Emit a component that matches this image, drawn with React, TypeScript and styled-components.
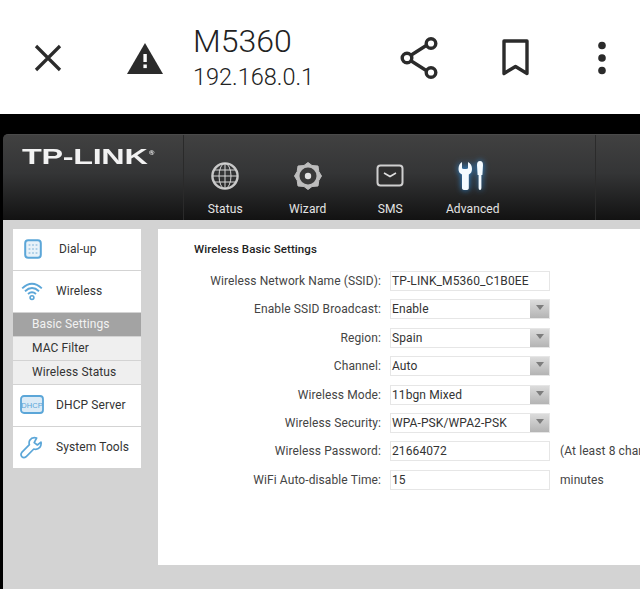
import React from 'react';
import styled, { createGlobalStyle } from 'styled-components';

const GlobalStyle = createGlobalStyle`
  html,
  body {
    margin: 0;
    padding: 0;
    background: #000;
    overflow: hidden;
  }
  * {
    box-sizing: border-box;
  }
`;

const Page = styled.div`
  width: 640px;
  height: 589px;
  overflow: hidden;
  display: flex;
  flex-direction: column;
  background: #000;
  font-family: Roboto, 'Liberation Sans', sans-serif;
`;

const TopBar = styled.header`
  height: 114px;
  flex: none;
  position: relative;
  display: grid;
  grid-template-columns: 96px 97px 1fr 96px 96px 76px;
  align-items: center;
  background: #fff;
  color: #2b2b2b;
`;

const IconCell = styled.div`
  display: flex;
  justify-content: center;
  align-items: center;
  height: 100%;
  padding-top: 1px;
`;

const TitleBlock = styled.div`
  display: flex;
  flex-direction: column;
  gap: 3px;
  margin-top: -2px;
`;

const Title = styled.div`
  font-size: 32px;
  line-height: 38px;
  font-weight: 300;
  color: #222;
`;

const Subtitle = styled.div`
  font-size: 23.5px;
  line-height: 28px;
  font-weight: 300;
  color: #222;
`;

const Router = styled.div`
  margin: 20px 0 0 3px;
  flex: 1;
  display: flex;
  flex-direction: column;
  min-height: 0;
`;

const Header = styled.div`
  height: 86px;
  flex: none;
  display: flex;
  border-radius: 5px 0 0 0;
  border-top: 1px solid #4a4a4a;
  background: linear-gradient(#414141 0%, #343536 45%, #121212 100%);
`;

const LogoBox = styled.div`
  width: 181px;
  flex: none;
  padding: 11px 0 0 19px;
  border-right: 1px solid #2a2a2a;
`;

const Logo = styled.div`
  display: flex;
  align-items: flex-start;
  width: 90px;
  transform: scaleX(1.47);
  transform-origin: left top;
  font-family: 'Liberation Sans', Arial, sans-serif;
  font-size: 22px;
  line-height: 22px;
  font-weight: 700;
  letter-spacing: -0.2px;
  color: #f2f2f2;
  sup {
    font-size: 5px;
    line-height: 8px;
    margin: 3px 0 0 1px;
  }
`;

const Nav = styled.nav`
  display: flex;
  width: 412px;
  flex: none;
  border-right: 1px solid #2b2b2b;
`;

const NavItem = styled.div`
  width: 82.5px;
  display: flex;
  flex-direction: column;
  align-items: center;
  padding-top: 25px;
`;

const NavIcon = styled.div`
  height: 32px;
  display: flex;
  align-items: center;
  justify-content: center;
`;

const NavLabel = styled.div`
  margin-top: 9px;
  font-size: 12px;
  line-height: 16px;
  letter-spacing: 0.1px;
  color: #e4e4e4;
`;

const Body = styled.div`
  flex: 1;
  min-height: 0;
  display: flex;
  align-items: flex-start;
  gap: 17px;
  padding: 9px 0 0 10px;
  background: #d3d3d3;
`;

const Sidebar = styled.aside`
  width: 128px;
  flex: none;
  display: flex;
  flex-direction: column;
  gap: 1.5px;
`;

const MenuItem = styled.div`
  height: 40.5px;
  display: flex;
  align-items: center;
  background: #fff;
  font-size: 12px;
  letter-spacing: 0.1px;
  color: #333;
`;

const MenuIcon = styled.div<{ $labelAt: number }>`
  width: ${({ $labelAt }) => $labelAt}px;
  flex: none;
  display: flex;
  justify-content: center;
  padding-right: 6px;
`;

const SubItem = styled.div<{ $active?: boolean }>`
  height: 22.5px;
  display: flex;
  align-items: center;
  padding-left: 19px;
  font-size: 12px;
  letter-spacing: 0.1px;
  background: ${({ $active }) => ($active ? '#a3a3a3' : '#efefef')};
  color: ${({ $active }) => ($active ? '#f2f2f2' : '#333')};
`;

const Panel = styled.main`
  flex: 1;
  height: 336px;
  min-width: 0;
  overflow: hidden;
  padding: 13px 0 0 36px;
  background: #fff;
`;

const PanelTitle = styled.h1`
  margin: 0 0 15px;
  font-size: 11.5px;
  line-height: 14px;
  font-weight: 500;
  letter-spacing: 0.1px;
  color: #222;
`;

const Form = styled.div`
  display: grid;
  grid-template-columns: 196px 160px auto;
  grid-auto-rows: 20px;
  row-gap: 8.4px;
  align-items: center;
  font-size: 12px;
  letter-spacing: 0.1px;
  color: #444;
`;

const Label = styled.div`
  padding-right: 9px;
  text-align: right;
  white-space: nowrap;
`;

const Field = styled.div`
  height: 20px;
  display: flex;
  align-items: center;
  justify-content: space-between;
  padding-left: 1px;
  border: 1px solid #e6e6e6;
  background: #fff;
  color: #333;
`;

const Arrow = styled.div`
  width: 19px;
  height: 18px;
  display: flex;
  align-items: center;
  justify-content: center;
  background: linear-gradient(#dcdcdc, #b4b4b4);
  &::after {
    content: '';
    margin-top: -3px;
    border-left: 4.5px solid transparent;
    border-right: 4.5px solid transparent;
    border-top: 5px solid #7d7d7d;
  }
`;

const Hint = styled.div`
  padding-left: 10px;
  white-space: nowrap;
`;

const iconColor = '#2b2b2b';
const blue = '#5ba6d8';

const CloseIcon = () => (
  <svg width="30" height="30" viewBox="0 0 30 30">
    <path d="M3 3 L27 27 M27 3 L3 27" stroke={iconColor} strokeWidth="3.2" fill="none" />
  </svg>
);

const WarningIcon = () => (
  <svg width="36" height="32" viewBox="0 0 36 32">
    <path d="M18 1 L36 32 H0 Z" fill={iconColor} />
    <rect x="16.4" y="12" width="3.4" height="8" fill="#fff" />
    <rect x="16.4" y="22.5" width="3.4" height="3.6" fill="#fff" />
  </svg>
);

const ShareIcon = () => (
  <svg width="40" height="42" viewBox="0 0 40 42" fill="none" stroke={iconColor} strokeWidth="3.4">
    <path d="M10.5 18.5 L27 8 M10.5 23.5 L27 34" />
    <circle cx="7" cy="21" r="4.8" />
    <circle cx="31" cy="6.5" r="4.8" />
    <circle cx="31" cy="35.5" r="4.8" />
  </svg>
);

const BookmarkIcon = () => (
  <svg width="30" height="38" viewBox="0 0 30 38">
    <path
      d="M3 2 H26 V34.5 L14.5 27.5 L3 34.5 Z"
      fill="none"
      stroke={iconColor}
      strokeWidth="3.4"
      strokeLinejoin="round"
    />
  </svg>
);

const DotsIcon = () => (
  <svg width="10" height="34" viewBox="0 0 10 34" fill={iconColor}>
    <circle cx="5" cy="4.5" r="3.8" />
    <circle cx="5" cy="17" r="3.8" />
    <circle cx="5" cy="29.5" r="3.8" />
  </svg>
);

const GlobeIcon = () => (
  <svg width="30" height="30" viewBox="0 0 30 30" fill="none" stroke="#d6d6d6">
    <circle cx="15" cy="15" r="12.6" strokeWidth="2.4" stroke="#c8c8c8" />
    <ellipse cx="15" cy="15" rx="6" ry="12.6" strokeWidth="1" />
    <path d="M15 2.5 V27.5 M2.5 15 H27.5 M4.5 9 H25.5 M4.5 21 H25.5" strokeWidth="1" />
  </svg>
);

const GearIcon = () => (
  <svg width="30" height="30" viewBox="0 0 30 30">
    <path
      d="M15 1.5 L19 4.5 L25 5 L25.8 10.5 L28.5 15 L25.8 19.5 L25 25 L19 25.5 L15 28.5 L11 25.5 L5 25 L4.2 19.5 L1.5 15 L4.2 10.5 L5 5 L11 4.5 Z"
      fill="#bdbdbd"
      stroke="#bdbdbd"
      strokeLinejoin="round"
    />
    <circle cx="15" cy="15" r="8.5" fill="#3a3a3a" />
    <circle cx="15" cy="15" r="3.2" fill="#e2e2e2" />
  </svg>
);

const MailIcon = () => (
  <svg width="28" height="24" viewBox="0 0 28 24" fill="none">
    <rect x="1.5" y="1.5" width="25" height="20" rx="3" stroke="#cfcfcf" strokeWidth="2" fill="#2f2f2f" />
    <path d="M8 9 L14 12.5 L20 9" stroke="#dedede" strokeWidth="1.6" />
  </svg>
);

const ToolsIcon = () => (
  <svg width="36" height="38" viewBox="0 0 36 38" style={{ filter: 'drop-shadow(0 0 3px #2f8fe0)' }}>
    <path
      d="M7 5 V11 Q7 12 9 12 H11 Q13 12 13 11 V5 Q17 7 17 12 Q17 16 13.8 17.5 V31 Q13.8 33 11 33 H10 Q7 33 7 31 V17.5 Q3.5 16 3.5 12 Q3.5 7 7 5 Z"
      fill="#f4fbff"
    />
    <path
      d="M22 8 Q22 4 25 4 Q28 4 28 8 L27.4 18 H26.4 V31 Q26.4 33 25 33 Q23.6 33 23.6 31 V18 H22.6 Z"
      fill="#f4fbff"
    />
  </svg>
);

const KeypadIcon = () => (
  <svg width="18" height="20" viewBox="0 0 18 20">
    <rect x="1.2" y="1.2" width="15.6" height="17.6" rx="3" fill="#e8f2f9" stroke={blue} strokeWidth="2" />
    {[5.5, 9, 12.5].map((x) =>
      [6, 10, 14].map((y) => <rect key={`${x}-${y}`} x={x - 0.9} y={y - 0.9} width="1.8" height="1.8" fill="#a9cde6" />),
    )}
  </svg>
);

const WifiIcon = () => (
  <svg width="22" height="20" viewBox="0 0 22 20" fill="none" stroke={blue} strokeWidth="1.9">
    <path d="M1.2 7.4 Q11 -1.8 20.8 7.4" />
    <path d="M4 10.2 Q11 4 18 10.2" />
    <path d="M7 13 Q11 9.6 15 13" />
    <circle cx="11" cy="16.6" r="1.9" fill="#fff" strokeWidth="1.6" />
  </svg>
);

const DhcpIcon = () => (
  <svg width="24" height="20" viewBox="0 0 24 20">
    <rect x="1" y="1" width="22" height="17" rx="3" fill="#dcebf6" stroke={blue} strokeWidth="1.8" />
    <text x="12" y="13" textAnchor="middle" fontFamily="'Liberation Sans', sans-serif" fontSize="7.5" fill={blue}>
      DHCP
    </text>
  </svg>
);

const WrenchIcon = () => (
  <svg width="23" height="23" viewBox="0 0 23 23">
    <path
      d="M21 6.2 L17.4 9 L14.2 6.6 L16.6 2 Q12 0.8 9.8 4.2 Q8.6 6.6 9.4 8.6 L1.8 16.4 Q0.2 18.6 1.8 20.6 Q3.8 22.4 6 20.8 L13.8 13 Q17.4 14 19.8 11.4 Q21.6 9 21 6.2 Z"
      fill="#fff"
      stroke={blue}
      strokeWidth="1.7"
      strokeLinejoin="round"
    />
  </svg>
);

const navItems = [
  { label: 'Status', icon: <GlobeIcon /> },
  { label: 'Wizard', icon: <GearIcon /> },
  { label: 'SMS', icon: <MailIcon /> },
  { label: 'Advanced', icon: <ToolsIcon /> },
];

const formRows = [
  { label: 'Wireless Network Name (SSID):', value: 'TP-LINK_M5360_C1B0EE' },
  { label: 'Enable SSID Broadcast:', value: 'Enable', select: true },
  { label: 'Region:', value: 'Spain', select: true },
  { label: 'Channel:', value: 'Auto', select: true },
  { label: 'Wireless Mode:', value: '11bgn Mixed', select: true },
  { label: 'Wireless Security:', value: 'WPA-PSK/WPA2-PSK', select: true },
  { label: 'Wireless Password:', value: '21664072', hint: '(At least 8 characters)' },
  { label: 'WiFi Auto-disable Time:', value: '15', hint: 'minutes' },
];

const App: React.FC = () => (
  <Page>
    <GlobalStyle />
    <TopBar>
      <IconCell>
        <CloseIcon />
      </IconCell>
      <IconCell>
        <WarningIcon />
      </IconCell>
      <TitleBlock>
        <Title>M5360</Title>
        <Subtitle>192.168.0.1</Subtitle>
      </TitleBlock>
      <IconCell>
        <ShareIcon />
      </IconCell>
      <IconCell>
        <BookmarkIcon />
      </IconCell>
      <IconCell>
        <DotsIcon />
      </IconCell>
    </TopBar>
    <Router>
      <Header>
        <LogoBox>
          <Logo>
            TP-LINK<sup>®</sup>
          </Logo>
        </LogoBox>
        <Nav>
          {navItems.map(({ label, icon }) => (
            <NavItem key={label}>
              <NavIcon>{icon}</NavIcon>
              <NavLabel>{label}</NavLabel>
            </NavItem>
          ))}
        </Nav>
      </Header>
      <Body>
        <Sidebar>
          <MenuItem>
            <MenuIcon $labelAt={46}>
              <KeypadIcon />
            </MenuIcon>
            Dial-up
          </MenuItem>
          <MenuItem>
            <MenuIcon $labelAt={43}>
              <WifiIcon />
            </MenuIcon>
            Wireless
          </MenuItem>
          <SubItem $active>Basic Settings</SubItem>
          <SubItem>MAC Filter</SubItem>
          <SubItem>Wireless Status</SubItem>
          <MenuItem>
            <MenuIcon $labelAt={43}>
              <DhcpIcon />
            </MenuIcon>
            DHCP Server
          </MenuItem>
          <MenuItem>
            <MenuIcon $labelAt={43}>
              <WrenchIcon />
            </MenuIcon>
            System Tools
          </MenuItem>
        </Sidebar>
        <Panel>
          <PanelTitle>Wireless Basic Settings</PanelTitle>
          <Form>
            {formRows.map(({ label, value, select, hint }) => (
              <React.Fragment key={label}>
                <Label>{label}</Label>
                <Field>
                  {value}
                  {select && <Arrow />}
                </Field>
                {hint ? <Hint>{hint}</Hint> : <div />}
              </React.Fragment>
            ))}
          </Form>
        </Panel>
      </Body>
    </Router>
  </Page>
);

export default App;
